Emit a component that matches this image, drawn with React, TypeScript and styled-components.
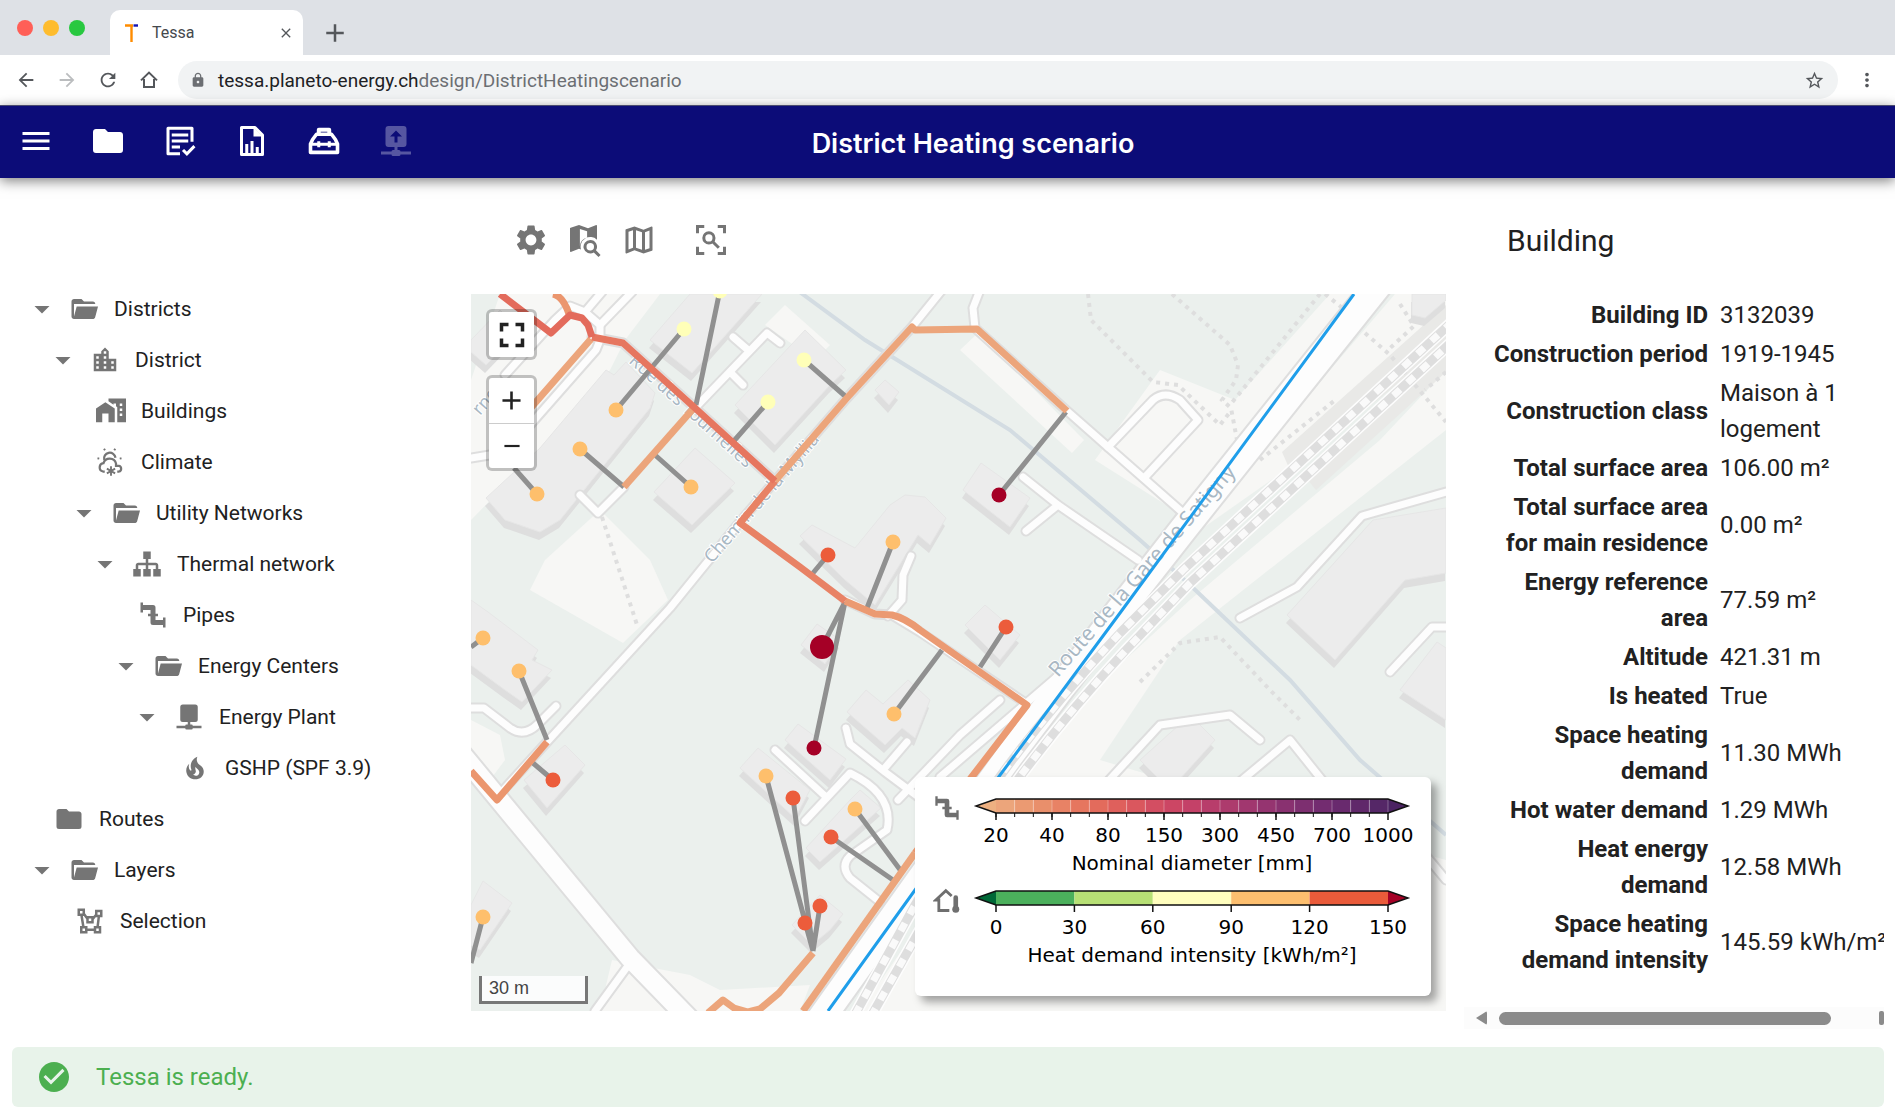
import React from "react";
import styled, { createGlobalStyle, css } from "styled-components";
import { MdSettings, MdOutlineMap, MdStarBorder, MdMoreVert, MdArrowBack, MdArrowForward, MdRefresh, MdClose, MdAdd, MdLock, MdFullscreen, MdRemove, MdCheckCircle } from "react-icons/md";

const GlobalStyle = createGlobalStyle`
  *, *::before, *::after { box-sizing: border-box; }
  body { margin: 0; background: #fff; color: #212121; font-family: Roboto, "Liberation Sans", sans-serif; }
`;

const bareButton = css`
  display: inline-flex;
  align-items: center;
  justify-content: center;
  border: 0;
  padding: 0;
  background: none;
  color: inherit;
  font: inherit;
  cursor: pointer;
  svg { flex: none; }
`;

/* ---------- icon drawings ---------- */

const paths = {
  menu: "M3,6H21V8H3V6M3,11H21V13H3V11M3,16H21V18H3V16Z",
  folder: "M10,4H4C2.89,4 2,4.89 2,6V18A2,2 0 0,0 4,20H20A2,2 0 0,0 22,18V8C22,6.89 21.1,6 20,6H12L10,4Z",
  folderOpen: "M19,20H4C2.89,20 2,19.1 2,18V6C2,4.89 2.89,4 4,4H10L12,6H19A2,2 0 0,1 21,8H21L4,8V18L6.14,10H23.21L20.93,18.5C20.7,19.37 19.92,20 19,20Z",
  city: "M19,15H17V13H19M19,19H17V17H19M13,7H11V5H13M13,11H11V9H13M13,15H11V13H13M13,19H11V17H13M7,11H5V9H7M7,15H5V13H7M7,19H5V17H7M15,11V5L12,2L9,5V7H3V21H21V11H15Z",
  homeCity: "M0,21V10L7.5,5L15,10V21H10V14H5V21H0M24,2V21H17V8.93L16,8.27V6H14V6.93L10,4.27V2H24M21,14H19V16H21V14M21,10H19V12H21V10M21,6H19V8H21V6Z",
  sitemap: "M9,2V8H11V11H5C3.89,11 3,11.89 3,13V16H1V22H7V16H5V13H11V16H9V22H15V16H13V13H19V16H17V22H23V16H21V13C21,11.89 20.11,11 19,11H13V8H15V2H9Z",
  pipe: "M22,14H20V16H14V13H16V11H14V6A2,2 0 0,0 12,4H4V2H2V10H4V8H10V11H8V13H10V18A2,2 0 0,0 12,20H20V22H22",
  plant: "M7 2h10a2 2 0 0 1 2 2v10a2 2 0 0 1-2 2h-4v2h1a1 1 0 0 1 1 1h7v2h-7a1 1 0 0 1-1 1h-4a1 1 0 0 1-1-1H2v-2h7a1 1 0 0 1 1-1h1v-2H7a2 2 0 0 1-2-2V4a2 2 0 0 1 2-2Z",
  upload: "M7 2h10a2 2 0 0 1 2 2v10a2 2 0 0 1-2 2h-4v2h1a1 1 0 0 1 1 1h7v2h-7a1 1 0 0 1-1 1h-4a1 1 0 0 1-1-1H2v-2h7a1 1 0 0 1 1-1h1v-2H7a2 2 0 0 1-2-2V4a2 2 0 0 1 2-2ZM12 5L8 9H11V13H13V9H16Z",
  fire: "M17.66 11.2C17.43 10.9 17.15 10.64 16.89 10.38C16.22 9.78 15.46 9.35 14.82 8.72C13.33 7.26 13 4.85 13.95 3C13 3.23 12.17 3.75 11.46 4.32C8.87 6.4 7.85 10.07 9.07 13.22C9.11 13.32 9.15 13.42 9.15 13.55C9.15 13.77 9 13.97 8.8 14.05C8.57 14.15 8.33 14.09 8.14 13.93C8.08 13.88 8.04 13.83 8 13.76C6.87 12.33 6.69 10.28 7.45 8.64C5.78 10 4.87 12.3 5 14.47C5.06 14.97 5.12 15.47 5.29 15.97C5.43 16.57 5.7 17.17 6 17.7C7.08 19.43 8.95 20.67 10.96 20.92C13.1 21.19 15.39 20.8 17.03 19.32C18.86 17.66 19.5 15 18.56 12.72L18.43 12.46C18.22 12 17.66 11.2 17.66 11.2M14.5 17.5C14.22 17.74 13.76 18 13.4 18.1C12.28 18.5 11.16 17.94 10.5 17.28C11.69 17 12.4 16.12 12.61 15.23C12.78 14.43 12.46 13.77 12.33 13C12.21 12.26 12.23 11.63 12.5 10.94C12.69 11.32 12.89 11.7 13.13 12C13.9 13 15.11 13.44 15.37 14.8C15.41 14.94 15.43 15.08 15.43 15.23C15.46 16.05 15.1 16.95 14.5 17.5Z",
  polygon: "M2,2V8H4.28L5.57,16H4V22H10V20.06L15,20.05V22H21V16H19.17L20,9H22V3H16V6.53L14.8,8H9.59L8,5.82V2M4,4H6V6H4M18,5H20V7H18M6.31,8H7.11L9,10.59V14H15V10.91L16.57,9H18L17.16,16H15V18.06H10V16H7.6M11,10H13V12H11M6,18H8V20H6M17,18H19V20H17",
  mapSearch: "M8,2L14,4.1L19.5,2Q20,2 20,2.5V11.8A6.5,6.5 0 0 0 9.3,18.3L8,17.9L2.5,20Q2,20 2,19.5V4.4Q2,4 2.4,3.9ZM8.6,4.6V16A6.5,6.5 0 0 1 13.4,10.3V6.2ZM15.5,12A4.5,4.5 0 0 1 19.31,18.9L22.39,22L21,23.39L17.88,20.32A4.5,4.5 0 1 1 15.5,12M15.5,14A2.5,2.5 0 0,0 13,16.5A2.5,2.5 0 0,0 15.5,19A2.5,2.5 0 0,0 18,16.5A2.5,2.5 0 0,0 15.5,14",
  caret: "M7,10L12,15L17,10H7Z",
};

type GlyphName = keyof typeof paths | "climate";

const Svg = styled.svg<{ $size: number }>`
  display: block;
  flex: none;
  width: ${(p) => p.$size}px;
  height: ${(p) => p.$size}px;
  fill: currentColor;
`;

const LineSvg = styled(Svg)`
  fill: none;
  stroke: currentColor;
  stroke-width: 2;
`;

function Glyph({ name, size }: { name: GlyphName; size: number }) {
  if (name === "climate") {
    return (
      <LineSvg $size={size} viewBox="0 0 24 24" aria-hidden="true">
        <path d="M6.6 10.4A4.6 4.6 0 1 1 15.6 8.6" strokeWidth="1.8" />
        <path d="M7 19.6H5.6A3.4 3.4 0 0 1 6 12.9A5.2 5.2 0 0 1 16 13.2V15H18.4A2.4 2.4 0 0 1 18.4 19.6H17" strokeWidth="1.8" />
        <path d="M12 15.4V23M8.7 17.3L15.3 21.1M15.3 17.3L8.7 21.1" strokeWidth="1.5" />
        <path d="M7.2 2.6L6.4 1.4M14.6 2.6L15.4 1.4M2.6 9.3L1.2 9M19 9.3L20.4 9" strokeWidth="1.6" />
      </LineSvg>
    );
  }
  return (
    <Svg $size={size} viewBox="0 0 24 24" aria-hidden="true">
      <path fillRule="evenodd" d={paths[name]} />
    </Svg>
  );
}

const TextCheckIcon = () => (
  <LineSvg $size={36} viewBox="0 0 24 24" aria-hidden="true">
    <path d="M12 20.5H4V3.5H20V12.5" strokeLinejoin="round" />
    <path d="M6.5 8H17.5M6.5 12H17.5M6.5 16H12" />
    <path d="M14 18L16.6 20.6L21.6 15.4" />
  </LineSvg>
);

const FileChartIcon = () => (
  <LineSvg $size={36} viewBox="0 0 24 24" aria-hidden="true">
    <path d="M14 3H5V21H19V8Z" strokeLinejoin="round" />
    <path d="M13 3V9H19Z" fill="currentColor" stroke="none" />
    <path d="M8.5 20V14M12 20V12M15.5 20V16" />
  </LineSvg>
);

const ToolboxIcon = () => (
  <LineSvg $size={36} viewBox="0 0 24 24" aria-hidden="true">
    <path d="M8.5 7V4.5H15.5V7" strokeWidth="2.6" strokeLinejoin="round" />
    <path d="M7 7.5H17L19.6 11L21 14V19.6H3V14L4.4 11Z" strokeWidth="2.4" strokeLinejoin="round" />
    <path d="M3 14.2H21M8.5 12.2V16.2M15.5 12.2V16.2" />
  </LineSvg>
);

const ScanSearchIcon = () => (
  <LineSvg $size={36} viewBox="0 0 24 24" aria-hidden="true">
    <path d="M7.5 3H3V7.5M16.5 3H21V7.5M21 16.5V21H16.5M7.5 21H3V16.5" />
    <circle cx="10.6" cy="10.6" r="3.4" />
    <path d="M13 13L17.2 17.2" />
  </LineSvg>
);

const HouseHeatIcon = () => (
  <LineSvg $size={28} viewBox="0 0 24 24" aria-hidden="true">
    <path d="M14 21H5V12H2.5L11 4L16 8.6" strokeWidth="2.4" />
    <path d="M19.5 10V18" strokeWidth="4" strokeLinecap="round" />
    <circle cx="19.5" cy="20" r="3" fill="currentColor" stroke="none" />
  </LineSvg>
);

const ChromeHomeIcon = () => (
  <LineSvg $size={20} viewBox="0 0 20 20" aria-hidden="true">
    <path d="M5 9V17H15V9M2 10.4L10 2.6L18 10.4" />
  </LineSvg>
);

/* ---------- browser frame ---------- */

const Page = styled.div`
  display: flex;
  flex-direction: column;
  min-height: 100vh;
`;

const TabStrip = styled.div`
  display: flex;
  align-items: flex-end;
  height: 55px;
  padding-left: 17px;
  background: #dee1e6;
`;

const Lights = styled.div`
  display: flex;
  gap: 10px;
  align-self: center;
  width: 93px;
`;

const Light = styled.span<{ $color: string }>`
  width: 16px;
  height: 16px;
  border-radius: 50%;
  background: ${(p) => p.$color};
`;

const Tab = styled.div`
  display: flex;
  align-items: center;
  width: 193px;
  height: 45px;
  padding: 0 5px 0 15px;
  border-radius: 10px 10px 0 0;
  background: #fff;
  color: #45494d;
  font-size: 16px;
`;

const TabTitle = styled.span`
  flex: 1;
  padding-left: 14px;
`;

const ChromeButton = styled.button<{ $faded?: boolean }>`
  ${bareButton}
  width: 24px;
  height: 24px;
  color: ${(p) => (p.$faded ? "#bbbdbf" : "#54575b")};
  font-size: 22px;
`;

const NewTab = styled(ChromeButton)`
  align-self: center;
  margin: 10px 0 0 20px;
  font-size: 30px;
`;

const AddressRow = styled.div`
  display: flex;
  align-items: center;
  gap: 17px;
  height: 50px;
  padding: 0 16px 0 14px;
  background: #fff;
`;

const Address = styled.div`
  display: flex;
  flex: 1;
  align-items: center;
  height: 38px;
  padding: 0 12px;
  border-radius: 19px;
  background: #f1f3f4;
  color: #6c6f73;
  font-size: 19px;
`;

const Url = styled.span`
  flex: 1;
  padding-left: 12px;
  b { color: #202124; font-weight: 400; }
`;

/* ---------- application ---------- */

const AppBar = styled.header`
  display: grid;
  grid-template-columns: 1fr auto 1fr;
  align-items: center;
  height: 73px;
  padding-bottom: 2px;
  border-top: 1px solid #4a4b6e;
  background: #0c0c78;
  color: #fff;
  box-shadow: 0 3px 12px rgba(0, 0, 0, 0.5);
`;

const BarActions = styled.nav`
  display: flex;
  gap: 36px;
  padding-left: 18px;
`;

const IconButton = styled.button<{ $dim?: boolean }>`
  ${bareButton}
  width: 36px;
  height: 36px;
  opacity: ${(p) => (p.$dim ? 0.3 : 1)};
  font-size: 36px;
`;

const AppTitle = styled.h1`
  margin: 0;
  padding: 6px 0 0 51px;
  font: 600 27px/36px Inter, Roboto, sans-serif;
`;

const Main = styled.main`
  display: grid;
  flex: 1;
  grid-template-columns: 471px minmax(0, 1fr) 420px;
  padding-right: 11px;
`;

const Tree = styled.ul`
  margin: 0;
  padding: 105px 0 0;
  list-style: none;
`;

const TreeRow = styled.li<{ $depth: number; $leaf: boolean }>`
  display: flex;
  align-items: center;
  height: 51px;
  padding-left: ${(p) => p.$depth * 21 + (p.$leaf ? 51 : 24)}px;
  font-size: 21px;
`;

const Toggle = styled.button`
  ${bareButton}
  width: 36px;
  height: 36px;
  margin-right: 6px;
  color: #757575;
`;

const NodeIcon = styled.span`
  display: flex;
  justify-content: center;
  width: 36px;
  margin-right: 12px;
  color: #757575;
`;

const MapColumn = styled.section`
  display: flex;
  flex-direction: column;
  padding: 44px 18px 18px 0;
`;

const MapTools = styled.div`
  display: flex;
  gap: 18px;
  padding: 0 42px 36px;
  color: #757575;
  button:last-child { margin-left: 18px; }
`;

const MapFrame = styled.div`
  position: relative;
  flex: 1;
  min-height: 560px;
  overflow: hidden;
  background: #ebf0ed;
`;

const MapDrawing = styled.svg`
  position: absolute;
  inset: 0;
  width: 100%;
  height: 100%;
`;

const MapControls = styled.div`
  position: absolute;
  top: 15px;
  left: 15px;
  display: grid;
  gap: 15px;
`;

const ControlGroup = styled.div`
  display: grid;
  border: 3px solid rgba(0, 0, 0, 0.22);
  border-radius: 6px;
  background: #fff;
  background-clip: padding-box;
`;

const ControlButton = styled.button`
  ${bareButton}
  width: 45px;
  height: 45px;
  color: #222;
  font-size: 31px;
  & + & { border-top: 1px solid #ccc; }
`;

const ScaleBar = styled.div`
  position: absolute;
  bottom: 7px;
  left: 8px;
  width: 109px;
  height: 28px;
  padding-left: 7px;
  border: 3px solid #777;
  border-top: 0;
  background: rgba(255, 255, 255, 0.8);
  color: #444;
  font: 18px/24px "Liberation Sans", Arial, sans-serif;
`;

const Legend = styled.aside`
  position: absolute;
  right: 15px;
  bottom: 15px;
  display: grid;
  align-content: start;
  width: 516px;
  height: 219px;
  padding-top: 15px;
  border-radius: 6px;
  background: #fff;
  box-shadow: 6px 6px 9px rgba(0, 0, 0, 0.35);
  color: #6f6f6f;
`;

const LegendRow = styled.div`
  display: flex;
  height: 92px;
  padding-left: 18px;
  > svg:first-child { margin-top: 2px; }
  > svg:last-child { margin-left: 4px; }
`;

const Scale = styled.svg`
  display: block;
  width: 456px;
  height: 92px;
  font: 20px "DejaVu Sans", sans-serif;
  text-anchor: middle;
`;

const Panel = styled.section`
  display: flex;
  flex-direction: column;
  min-width: 0;
  overflow: hidden;
`;

const PanelTitle = styled.h2`
  margin: 0;
  padding: 39px 43px 29px;
  font: 400 30px/48px Roboto, sans-serif;
`;

const Facts = styled.table`
  width: 100%;
  padding-left: 22px;
  border-spacing: 3px;
  table-layout: fixed;
  font-size: 24px;
  line-height: 36px;
  th, td { padding: 0; }
  th { width: 228px; padding-right: 9px; text-align: right; font-weight: 700; }
`;

const ScrollTrack = styled.div`
  display: flex;
  align-items: center;
  height: 22px;
  margin-top: auto;
  padding-left: 12px;
  background: #fcfcfc;
`;

const ScrollArrow = styled.span<{ $right?: boolean }>`
  width: ${(p) => (p.$right ? 5 : 11)}px;
  height: 14px;
  background: #8b8b8b;
  clip-path: ${(p) => (p.$right ? "none" : "polygon(0 50%, 100% 0, 100% 100%)")};
  border-radius: 2px;
`;

const ScrollThumb = styled.span`
  flex: 1;
  height: 13px;
  margin: 0 48px 0 12px;
  border-radius: 7px;
  background: #8b8b8b;
`;

const Status = styled.div`
  display: flex;
  align-items: center;
  gap: 24px;
  height: 60px;
  margin: 18px 11px 8px 12px;
  padding-left: 24px;
  border-radius: 6px;
  background: #e8f3ea;
  color: #4caf50;
  font-size: 24px;
  svg { width: 36px; height: 36px; }
`;

/* ---------- data ---------- */

type Node = { label: string; icon: GlyphName; depth: number; leaf?: boolean };

const nodes: Node[] = [
  { label: "Districts", icon: "folderOpen", depth: 0 },
  { label: "District", icon: "city", depth: 1 },
  { label: "Buildings", icon: "homeCity", depth: 2, leaf: true },
  { label: "Climate", icon: "climate", depth: 2, leaf: true },
  { label: "Utility Networks", icon: "folderOpen", depth: 2 },
  { label: "Thermal network", icon: "sitemap", depth: 3 },
  { label: "Pipes", icon: "pipe", depth: 4, leaf: true },
  { label: "Energy Centers", icon: "folderOpen", depth: 4 },
  { label: "Energy Plant", icon: "plant", depth: 5 },
  { label: "GSHP (SPF 3.9)", icon: "fire", depth: 6, leaf: true },
  { label: "Routes", icon: "folder", depth: 0, leaf: true },
  { label: "Layers", icon: "folderOpen", depth: 0 },
  { label: "Selection", icon: "polygon", depth: 1, leaf: true },
];

const facts: [string, string][] = [
  ["Building ID", "3132039"],
  ["Construction period", "1919-1945"],
  ["Construction class", "Maison à 1 logement"],
  ["Total surface area", "106.00 m²"],
  ["Total surface area for main residence", "0.00 m²"],
  ["Energy reference area", "77.59 m²"],
  ["Altitude", "421.31 m"],
  ["Is heated", "True"],
  ["Space heating demand", "11.30 MWh"],
  ["Hot water demand", "1.29 MWh"],
  ["Heat energy demand", "12.58 MWh"],
  ["Space heating demand intensity", "145.59\u00a0kWh/m²"],
];

const diameterColors = ["#eca57b", "#eb9a72", "#e98f6b", "#e88265", "#e6765f", "#e36b5c", "#df605c", "#da575e", "#d34e62", "#cc4664", "#c44168", "#b83d6b", "#ad3b6d", "#a1376f", "#953470", "#893170", "#7d2f70", "#732c70", "#692a6e", "#60286a", "#552767"];
const intensityColors = ["#4bb05c", "#b7e075", "#fffebe", "#fdbf6f", "#ea5b3a"];

const dottedPaths = [
  "M1172 294L1230 345L1238 365L1236 380L1222 400L1231 408L1237 440",
  "M1320 294L1230 405",
  "M1088 294L1091 320L1153 382L1178 385L1220 425L1230 412",
  "M1260 460L1334 401",
  "M1365 333L1390 355L1446 422",
  "M1400 304L1414 326L1388 350",
  "M1446 372L1425 390",
  "M1140 682L1180 643L1220 637L1270 690L1300 720",
  "M602 517L638 628",
  "M1325 294L1345 310",
];

const narrowRoads = [
  "M497 797L547 742L670 608L739 523L775 481L846 399L912 327L942 290",
  "M592 337L623 343L695 408L775 481",
  "M695 408L767 333L780 343M733 337L748 350M730 372L743 385",
  "M600 340L600 325L585 312L570 306L555 320L505 375",
  "M585 312L602 292M600 325L632 292",
  "M600 340L596 350L530 425",
  "M471 458L520 450",
  "M580 495L598 513L624 487",
  "M980 290L973 308L975 328L1066 410L1108 447L1182 512",
  "M1108 447L1153 400Q1165 390 1180 400L1198 420L1146 476",
  "M1023 477L1058 505L1138 560M1058 505L1026 531",
  "M845 600L875 614L892 615L920 632L1027 704",
  "M911 556L903 575L902 600L888 616",
  "M471 708L484 708L510 728Q524 738 538 724L556 706",
  "M775 750L825 796M805 821L850 773Q895 795 887 830L850 856Q840 866 850 878L880 902",
  "M846 728L850 744L885 772L925 802M883 770L907 742",
  "M630 963L595 1011",
  "M1240 618L1297 587L1362 516L1446 492",
  "M1390 672L1432 627L1446 627",
  "M898 800L960 735L1000 700M940 777L1100 640",
  "M1100 790L1160 725L1230 715L1260 740M1230 790L1290 740L1330 790",
  "M1446 880L1380 800",
];

const buildings = [
  "M471 340L500 310L520 330L486 365L471 352Z",
  "M650 340L690 294L762 294L692 373Z",
  "M486 498L540 448L606 370L614 375L626 362L655 393L650 408L560 520L540 532L505 520Z",
  "M654 492L695 448L735 483L692 525Z",
  "M735 405L805 330L846 370L830 385L775 445Z",
  "M800 536L812 525L855 548L890 505L905 495L925 497L946 518L930 545L918 535L875 605L845 580Z",
  "M875 390L885 380L899 392L889 405Z",
  "M963 490L981 463L1030 498L1010 527Z",
  "M471 600L488 612L538 650L532 660L552 670L522 702L505 690L471 665Z",
  "M524 780L565 745L585 765L547 808Z",
  "M471 905L483 881L512 903L480 950L471 945Z",
  "M801 645L817 624L840 640L825 664Z",
  "M785 740L798 724L846 759L830 780Z",
  "M740 768L758 748L810 790L795 818Z",
  "M806 848L850 800L860 790L881 808L820 862Z",
  "M847 712L866 690L883 704L908 680L930 700L915 738L902 728L885 745Z",
  "M792 925L820 895L843 914L830 930L812 945Z",
  "M985 605L965 625L1000 660L1020 635Z",
  "M1287 615L1373 520L1446 508L1446 573L1405 580L1335 660Z",
  "M1400 690L1437 642L1446 648L1446 720Z",
  "M1140 760L1190 715L1215 740L1170 790Z",
  "M1412 294L1412 315L1425 318L1446 300V294Z",
];

const clearings = [
  "M500 294L660 294L625 340L610 370L520 470L471 520V380Z",
  "M545 560L600 510L650 560L668 600L623 643L530 590Z",
  "M960 350L978 333L1084 440L1072 453Z",
  "M1095 460L1160 370L1235 400L1330 294L1370 294L1190 520Z",
  "M765 325L785 305L830 345L815 360Z",
  "M1446 370L1380 440L1190 600L1060 720L860 1011H1020L1446 1011V860L1300 820L1100 760L1180 640L1446 430Z",
  "M471 720L500 735L505 760L490 780L471 760Z",
  "M1330 370L1395 294H1446V340L1300 460L1200 530Z",
  "M612 960L690 975L720 990L810 985L800 1011H600Z",
];

const pipes: [string, string][] = [
  ["#eca57b", "M591 339L535 403L505 438"],
  ["#eca57b", "M693 409L624 487"],
  ["#eca57b", "M775 481L846 399L912 327L915 330L977 329L1067 411"],
  ["#eca57b", "M813 953L779 993L760 1009L748 1012L734 1008L723 1000L708 1013"],
  ["#eb966e", "M553 294Q563 296 569 314"],
  ["#eb966e", "M471 771L497 800L547 742"],
  ["#eca57b", "M915 853L803 1011"],
  ["#eb9a72", "M845 601L875 614L892 615Q905 618 920 630L1027 705L971 778L915 853"],
  ["#e88265", "M775 481L740 523L800 567L845 601"],
  ["#e6765f", "M592 337L623 343L695 408L775 481"],
  ["#e36b5c", "M500 294L551 333L570 315L582 318L588 325L592 337"],
];

const links = "M684 329L616 410M720 290L696 405M580 449L624 487M655 455L691 487M768 402L733 442M804 360L845 396M514 468L537 494M1066 412L999 495M828 555L813 573M893 542L867 608M1006 627L980 667M845 602L822 647M845 602L814 748M942 650L894 714M471 647L483 638M519 671L547 740M533 763L553 780M766 776L813 951M793 798L813 951M805 922L813 951M820 906L813 951M855 809L901 871M831 837L893 880M483 917L471 963";

const demand: { color: string; points: [number, number][] }[] = [
  { color: "#ffffb8", points: [[684, 329], [720, 291], [768, 402], [804, 360]] },
  { color: "#febf6c", points: [[616, 410], [580, 449], [691, 487], [537, 494], [893, 542], [483, 638], [519, 671], [894, 714], [766, 776], [855, 809], [483, 917]] },
  { color: "#ec5c3b", points: [[828, 555], [1006, 627], [553, 780], [793, 798], [831, 837], [820, 906], [805, 923]] },
  { color: "#a50026", points: [[999, 495], [814, 748]] },
];

const rail = "M1452 322L1183 570L1120 633Q1000 760 915 905L852 1020";
const rail2 = "M1456 338L1190 583L1126 650Q1012 772 929 914L869 1020";

function NetworkMap() {
  return (
    <MapDrawing viewBox="471 294 975 717" preserveAspectRatio="xMidYMid slice" role="img" aria-label="District heating network map">
      <g fill="#f7f7f5">{clearings.map((d) => <path key={d} d={d} />)}</g>
      <path d="M1282 452L1446 305V345L1290 470ZM1308 480L1446 352V372L1316 490Z" fill="#e9e9e7" />
      <g transform="translate(-1 8)" fill="#dedede">{buildings.map((d) => <path key={d} d={d} />)}</g>
      <g fill="#ececec" stroke="#e6e6e6">{buildings.map((d) => <path key={d} d={d} />)}</g>
      <path d="M797 290L865 340L1010 430L1140 540L1190 585L1290 680L1360 760L1446 835" fill="none" stroke="#d3dce2" strokeWidth="4" />
      <g fill="none" stroke="#dedede" strokeWidth="4" strokeDasharray="4 5">{dottedPaths.map((d) => <path key={d} d={d} />)}</g>
      <g fill="none" strokeLinecap="round" strokeLinejoin="round">
        <g stroke="#dedede" strokeWidth="11">{narrowRoads.map((d) => <path key={d} d={d} />)}</g>
        <path d="M460 752L497 797L630 958L700 1030" stroke="#dedede" strokeWidth="23" />
        <path d="M1378 285L1185 527L1120 610L1010 755L920 880L820 1020" stroke="#dedede" strokeWidth="31" />
        <g stroke="#fdfdfd" strokeWidth="7">{narrowRoads.map((d) => <path key={d} d={d} />)}</g>
        <path d="M460 752L497 797L630 958L700 1030" stroke="#fdfdfd" strokeWidth="19" />
        <path d="M1378 285L1185 527L1120 610L1010 755L920 880L820 1020" stroke="#fdfdfd" strokeWidth="27" />
      </g>
      {[rail, rail2].map((d) => (
        <g key={d} fill="none">
          <path d={d} stroke="#fdfdfd" strokeWidth="12" />
          <path d={d} stroke="#dedede" strokeWidth="9" />
          <path d={d} stroke="#fafafa" strokeWidth="7" strokeDasharray="9 10" />
        </g>
      ))}
      <g fill="#a9b8c4" fontFamily="Noto Sans, sans-serif" fontSize="18" stroke="#fff" strokeWidth="2" paintOrder="stroke">
        <text transform="translate(628 362) rotate(42)">Rue des Tournelles</text>
        <text transform="translate(712 564) rotate(-49)">Chemin de la Myllia</text>
        <text transform="translate(1058 678) rotate(-49)" fontSize="21">Route de la Gare de Satigny</text>
        <text transform="translate(480 416) rotate(-49)">rnex</text>
      </g>
      <path d="M1354 294L1120 613L915 890L828 1011" fill="none" stroke="#1f9eea" strokeWidth="3" />
      <path d={links} fill="none" stroke="#909090" strokeWidth="5" />
      <g fill="none" strokeWidth="7" strokeLinejoin="round">{pipes.map(([color, d]) => <path key={d} d={d} stroke={color} />)}</g>
      {demand.map(({ color, points }) => (
        <g key={color} fill={color}>{points.map(([x, y]) => <circle key={`${x}-${y}`} cx={x} cy={y} r="7.5" />)}</g>
      ))}
      <circle cx="822" cy="647" r="12" fill="#a50026" />
    </MapDrawing>
  );
}

type ScaleProps = { colors: string[]; labels: string[]; title: string; ends: [string, string]; minor?: boolean };

function ColorScale({ colors, labels, title, ends, minor }: ScaleProps) {
  const left = 31;
  const span = 392;
  const cell = span / colors.length;
  const step = span / (labels.length - 1);
  return (
    <Scale viewBox="0 0 456 92" role="img" aria-label={title}>
      <path d="M31 7L11 14L31 21Z" fill={ends[0]} />
      {colors.map((color, i) => <rect key={color} x={left + i * cell} y="7" width={cell} height="14" fill={color} />)}
      <path d="M423 7L443 14L423 21Z" fill={ends[1]} />
      {minor && <path d={Array.from({ length: 21 }, (_, i) => `M${left + (i + 1) * cell} 8V20`).join("")} stroke="#fff" strokeOpacity="0.3" />}
      <path d="M31 7H423L443 14L423 21H31L11 14Z" fill="none" stroke="#111" strokeWidth="1.5" />
      {minor && <path d={Array.from({ length: 21 }, (_, i) => `M${left + i * cell} 21V25`).join("")} stroke="#111" />}
      {labels.map((label, i) => (
        <g key={label}>
          <path d={`M${left + i * step} 21V28`} stroke="#111" strokeWidth="1.5" />
          <text x={left + i * step} y="50">{label}</text>
        </g>
      ))}
      <text x={left + span / 2} y="78">{title}</text>
    </Scale>
  );
}

export default function App() {
  return (
    <Page>
      <GlobalStyle />
      <TabStrip>
        <Lights>
          <Light $color="#ff5f57" />
          <Light $color="#febc2e" />
          <Light $color="#28c840" />
        </Lights>
        <Tab>
          <svg width="13" height="18" viewBox="0 0 13 18" aria-hidden="true">
            <path d="M0 1.5H8M6.5 2V18" stroke="#ff8c00" strokeWidth="2.4" fill="none" />
            <path d="M8.5 1.5H13" stroke="#1414b4" strokeWidth="2.4" />
          </svg>
          <TabTitle>Tessa</TabTitle>
          <ChromeButton aria-label="Close tab"><MdClose size={16} /></ChromeButton>
        </Tab>
        <NewTab aria-label="New tab"><MdAdd size={30} /></NewTab>
      </TabStrip>
      <AddressRow>
        <ChromeButton aria-label="Back"><MdArrowBack /></ChromeButton>
        <ChromeButton aria-label="Forward" $faded><MdArrowForward /></ChromeButton>
        <ChromeButton aria-label="Reload"><MdRefresh /></ChromeButton>
        <ChromeButton aria-label="Home"><ChromeHomeIcon /></ChromeButton>
        <Address>
          <MdLock size={16} />
          <Url><b>tessa.planeto-energy.ch</b>design/DistrictHeatingscenario</Url>
          <ChromeButton aria-label="Bookmark"><MdStarBorder size={21} /></ChromeButton>
        </Address>
        <ChromeButton aria-label="Browser menu"><MdMoreVert /></ChromeButton>
      </AddressRow>

      <AppBar>
        <BarActions>
          <IconButton aria-label="Menu"><Glyph name="menu" size={36} /></IconButton>
          <IconButton aria-label="Open project"><Glyph name="folder" size={36} /></IconButton>
          <IconButton aria-label="Tasks"><TextCheckIcon /></IconButton>
          <IconButton aria-label="Reports"><FileChartIcon /></IconButton>
          <IconButton aria-label="Tools"><ToolboxIcon /></IconButton>
          <IconButton aria-label="Upload" $dim disabled><Glyph name="upload" size={36} /></IconButton>
        </BarActions>
        <AppTitle>District Heating scenario</AppTitle>
      </AppBar>

      <Main>
        <Tree>
          {nodes.map((n) => (
            <TreeRow key={n.label} $depth={n.depth} $leaf={!!n.leaf}>
              {!n.leaf && <Toggle aria-label={`Collapse ${n.label}`}><Glyph name="caret" size={36} /></Toggle>}
              <NodeIcon><Glyph name={n.icon} size={30} /></NodeIcon>
              {n.label}
            </TreeRow>
          ))}
        </Tree>

        <MapColumn>
          <MapTools>
            <IconButton aria-label="Settings"><MdSettings /></IconButton>
            <IconButton aria-label="Search map"><Glyph name="mapSearch" size={36} /></IconButton>
            <IconButton aria-label="Base map"><MdOutlineMap /></IconButton>
            <IconButton aria-label="Zoom to selection"><ScanSearchIcon /></IconButton>
          </MapTools>
          <MapFrame>
            <NetworkMap />
            <MapControls>
              <ControlGroup>
                <ControlButton aria-label="Full screen"><MdFullscreen size={42} /></ControlButton>
              </ControlGroup>
              <ControlGroup>
                <ControlButton aria-label="Zoom in"><MdAdd /></ControlButton>
                <ControlButton aria-label="Zoom out"><MdRemove size={26} /></ControlButton>
              </ControlGroup>
            </MapControls>
            <ScaleBar>30 m</ScaleBar>
            <Legend>
              <LegendRow>
                <Glyph name="pipe" size={28} />
                <ColorScale colors={diameterColors} labels={["20", "40", "80", "150", "300", "450", "700", "1000"]} title="Nominal diameter [mm]" ends={["#edb081", "#4b2362"]} minor />
              </LegendRow>
              <LegendRow>
                <HouseHeatIcon />
                <ColorScale colors={intensityColors} labels={["0", "30", "60", "90", "120", "150"]} title="Heat demand intensity [kWh/m²]" ends={["#006837", "#a50026"]} />
              </LegendRow>
            </Legend>
          </MapFrame>
        </MapColumn>

        <Panel>
          <PanelTitle>Building</PanelTitle>
          <Facts>
            <tbody>
              {facts.map(([name, value]) => (
                <tr key={name}>
                  <th scope="row">{name}</th>
                  <td>{value}</td>
                </tr>
              ))}
            </tbody>
          </Facts>
          <ScrollTrack>
            <ScrollArrow />
            <ScrollThumb />
            <ScrollArrow $right />
          </ScrollTrack>
        </Panel>
      </Main>

      <Status role="status"><MdCheckCircle />Tessa is ready.</Status>
    </Page>
  );
}
